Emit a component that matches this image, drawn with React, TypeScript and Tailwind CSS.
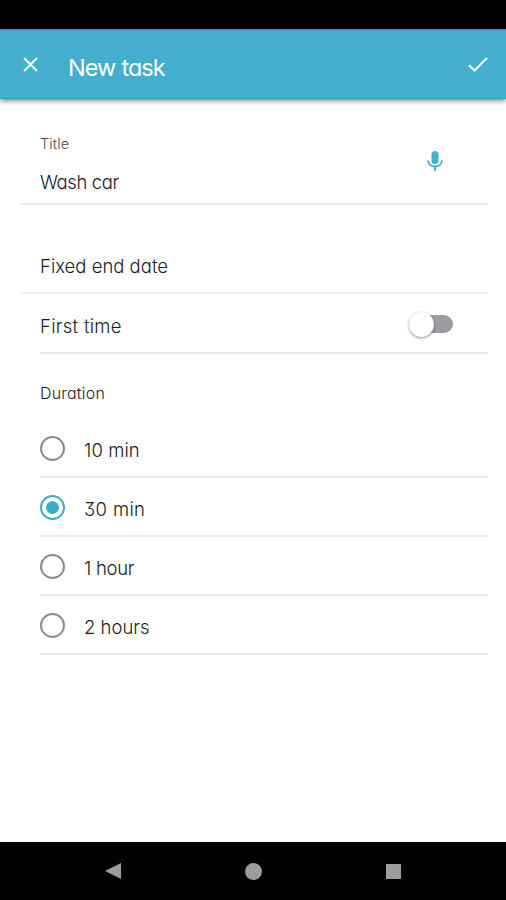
type Option = { label: string; selected?: boolean; text: string };

const options: Option[] = [
  { label: "10 min", text: "tracking-[0.1px]" },
  { label: "30 min", selected: true, text: "tracking-[0.35px]" },
  { label: "1 hour", text: "tracking-[-0.3px]" },
  { label: "2 hours", text: "tracking-[0px]" },
];

function Radio({ selected }: { selected?: boolean }) {
  return (
    <span
      className={
        selected
          ? "mt-[2px] flex size-[25px] items-center justify-center rounded-full border-[2.4px] border-[#3badcb]"
          : "mt-[2px] flex size-[25px] items-center justify-center rounded-full border-2 border-[#8b8b8b]"
      }
    >
      {selected && <span className="size-[13px] rounded-full bg-[#3badcb]" />}
    </span>
  );
}

export default function App() {
  return (
    <div className="flex h-[900px] w-[506px] flex-col overflow-hidden bg-white font-['Inter','Liberation_Sans',sans-serif] font-light text-[#1c1c1c] [font-feature-settings:'cv11','cv09','ss03']">
      <div className="h-[29px] shrink-0 bg-black" />
      <header className="flex h-[70px] shrink-0 items-center border-t border-b border-t-[#2c8ba5] border-b-[#38a2be] bg-[#43aecd] text-white shadow-[0_2px_5px_rgba(0,0,0,0.5)]">
        <svg className="ml-[22.5px] size-[15px]" viewBox="0 0 15 15" fill="none" stroke="currentColor" strokeWidth="2">
          <path d="M1 1 L14 14 M14 1 L1 14" />
        </svg>
        <h1 className="mt-[7px] ml-[30.5px] text-[23.5px] leading-[30px] font-normal tracking-[-1.05px] [word-spacing:1px] whitespace-nowrap">New task</h1>
        <svg className="mr-[18px] ml-auto size-5" viewBox="0 0 20 20" fill="none" stroke="currentColor" strokeWidth="2.1">
          <path d="M1 11.2 L6.5 16.5 L19 4.1" />
        </svg>
      </header>

      <main className="flex grow flex-col pr-[18px] pl-5">
        <section className="flex h-[106px] shrink-0 justify-between border-b-2 border-[#ebebeb] pl-5">
          <div className="pt-[35px]">
            <div className="text-[14.5px] leading-5 tracking-[0.1px] text-[#4a4a4a]">Title</div>
            <div className="mt-[16px] text-[18.5px] leading-6 tracking-[-0.4px]">Wash car</div>
          </div>
          <svg className="mt-[52px] mr-[45px] h-[22px] w-4" viewBox="0 0 16 22" fill="none" stroke="#43aecd" strokeWidth="2">
            <rect x="4.5" y="0" width="7" height="13" rx="3.5" fill="#43aecd" stroke="none" />
            <path d="M1 9.5 C1.5 17.5 14.5 17.5 15 9.5 M8 15.5 V20" />
          </svg>
        </section>
        <section className="flex h-[89px] shrink-0 items-end border-b-2 border-[#f0f0f0] pb-[14px] pl-5 text-[18.5px] leading-6 tracking-[0px]">
          Fixed end date
        </section>
        <section className="ml-5 flex h-[60px] shrink-0 items-center justify-between border-b-2 border-[#e8e8e8] text-[18.5px] leading-6">
          <span className="mt-[5px] tracking-[0.3px]">First time</span>
          <span className="mt-[2px] mr-[35px] flex h-[18px] w-[42px] items-center rounded-full bg-[#9c9ca1]">
            <span className="-ml-[2px] size-[25px] shrink-0 rounded-full bg-white shadow-[0_1px_3px_rgba(0,0,0,0.45)]" />
          </span>
        </section>
        <section className="ml-5">
          <h2 className="h-[65px] pt-[27px] text-[16px] leading-6 tracking-[0.2px]">Duration</h2>
          {options.map((o) => (
            <div key={o.label} className="flex h-[59px] items-center gap-[19px] border-b-2 border-[#ebebeb]">
              <Radio selected={o.selected} />
              <span className={`${o.text} mt-[4px] text-[18.5px] leading-6`}>{o.label}</span>
            </div>
          ))}
        </section>
      </main>

      <nav className="flex h-[58px] shrink-0 items-center justify-between bg-black px-[105px]">
        <svg className="size-4" viewBox="0 0 16 18" preserveAspectRatio="none" fill="#9d9d9d"><path d="M0 9 L16 0 V18 Z" /></svg>
        <span className="size-[17px] rounded-full bg-[#9d9d9d]" />
        <span className="size-[15px] bg-[#9d9d9d]" />
      </nav>
    </div>
  );
}
